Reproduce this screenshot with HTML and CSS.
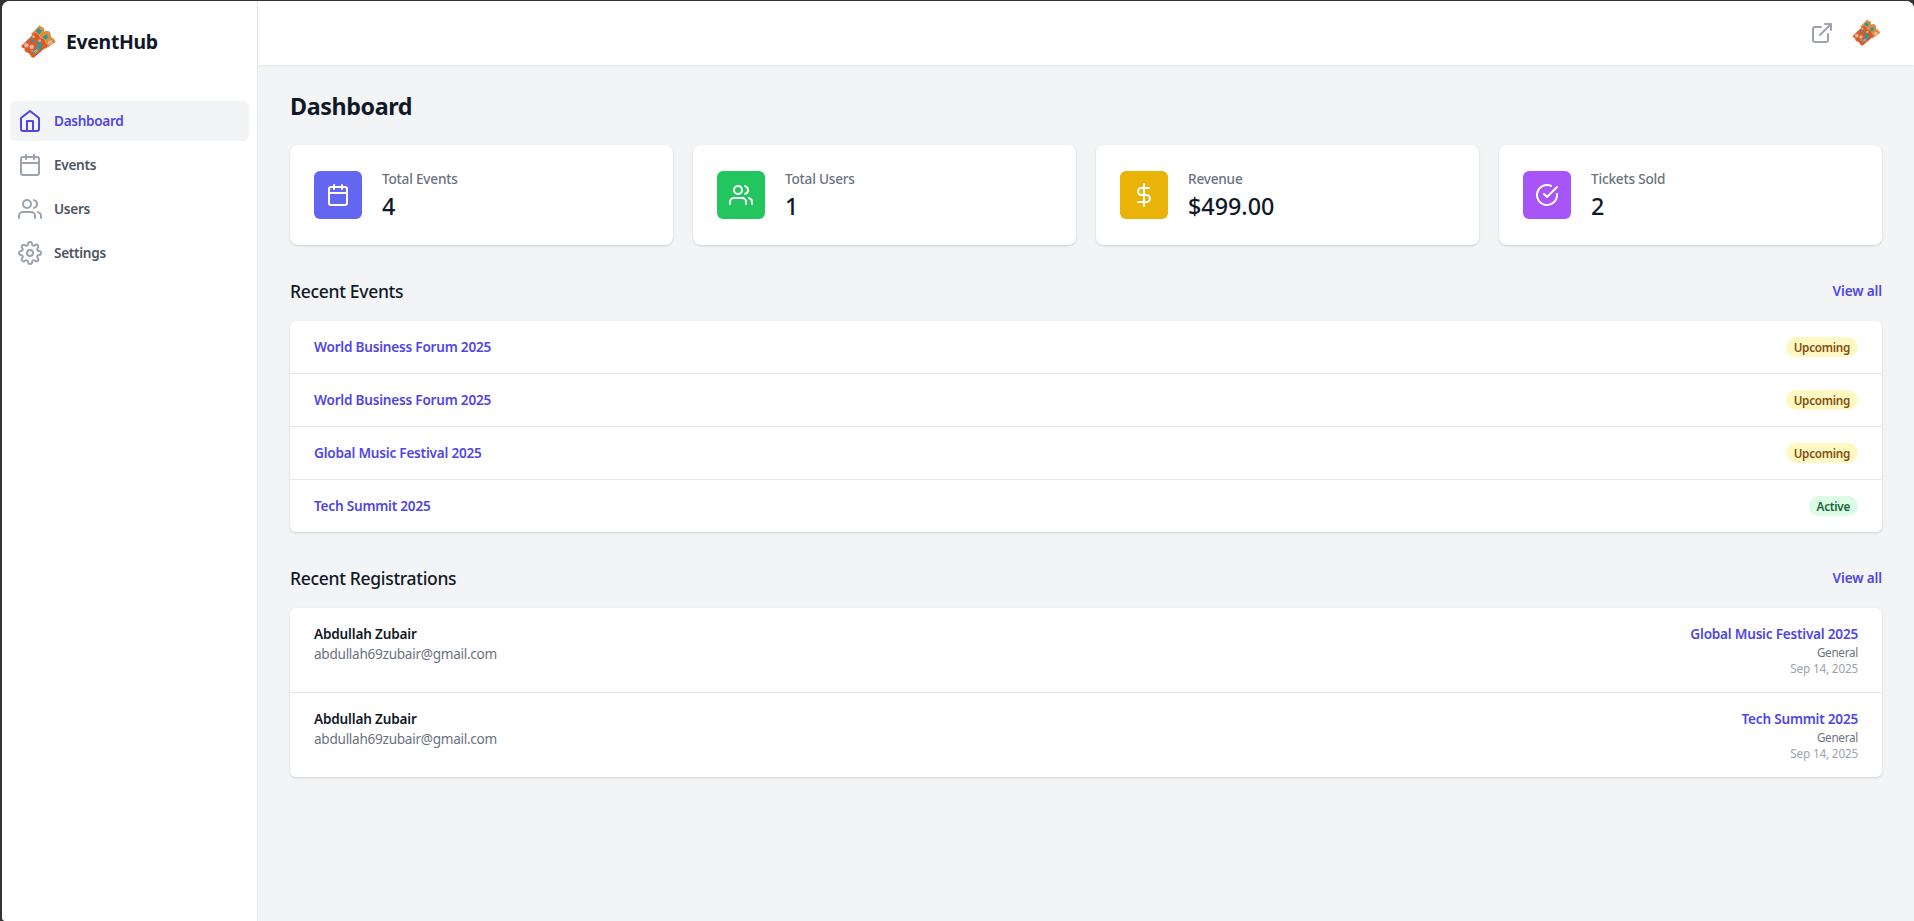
FILE: index.html
```html
<!DOCTYPE html>
<html lang="en">
<head>
<meta charset="utf-8">
<title>EventHub Dashboard</title>
<link rel="stylesheet" href="styles.css">
</head>
<body>
<svg class="defs" aria-hidden="true">
  <symbol id="i-home" viewBox="0 0 24 24"><path d="M3 9l9-7 9 7v11a2 2 0 0 1-2 2H5a2 2 0 0 1-2-2z"/><path d="M9 22V12h6v10"/></symbol>
  <symbol id="i-calendar" viewBox="0 0 24 24"><rect x="3" y="4" width="18" height="18" rx="2"/><path d="M16 2v4M8 2v4M3 10h18"/></symbol>
  <symbol id="i-users" viewBox="0 0 24 24"><path d="M17 21v-2a4 4 0 0 0-4-4H5a4 4 0 0 0-4 4v2"/><circle cx="9" cy="7" r="4"/><path d="M23 21v-2a4 4 0 0 0-3-3.87M16 3.13a4 4 0 0 1 0 7.75"/></symbol>
  <symbol id="i-settings" viewBox="0 0 24 24"><circle cx="12" cy="12" r="3"/><path d="M19.4 15a1.65 1.65 0 0 0 .33 1.82l.06.06a2 2 0 0 1 0 2.83 2 2 0 0 1-2.83 0l-.06-.06a1.65 1.65 0 0 0-1.82-.33 1.65 1.65 0 0 0-1 1.51V21a2 2 0 0 1-2 2 2 2 0 0 1-2-2v-.09A1.65 1.65 0 0 0 9 19.4a1.65 1.65 0 0 0-1.82.33l-.06.06a2 2 0 0 1-2.83 0 2 2 0 0 1 0-2.83l.06-.06a1.65 1.65 0 0 0 .33-1.82 1.65 1.65 0 0 0-1.51-1H3a2 2 0 0 1-2-2 2 2 0 0 1 2-2h.09A1.65 1.65 0 0 0 4.6 9a1.65 1.65 0 0 0-.33-1.82l-.06-.06a2 2 0 0 1 0-2.83 2 2 0 0 1 2.83 0l.06.06a1.65 1.65 0 0 0 1.82.33H9a1.65 1.65 0 0 0 1-1.51V3a2 2 0 0 1 2-2 2 2 0 0 1 2 2v.09a1.65 1.65 0 0 0 1 1.51 1.65 1.65 0 0 0 1.82-.33l.06-.06a2 2 0 0 1 2.83 0 2 2 0 0 1 0 2.83l-.06.06a1.65 1.65 0 0 0-.33 1.82V9a1.65 1.65 0 0 0 1.51 1H21a2 2 0 0 1 2 2 2 2 0 0 1-2 2h-.09a1.65 1.65 0 0 0-1.51 1z"/></symbol>
  <symbol id="i-external" viewBox="0 0 24 24"><path d="M18 13v6a2 2 0 0 1-2 2H5a2 2 0 0 1-2-2V8a2 2 0 0 1 2-2h6M15 3h6v6M10 14L21 3"/></symbol>
  <symbol id="i-dollar" viewBox="0 0 24 24"><path d="M12 1v22M17 5H9.5a3.5 3.5 0 0 0 0 7h5a3.5 3.5 0 0 1 0 7H6"/></symbol>
  <symbol id="i-check" viewBox="0 0 24 24"><path d="M22 11.08V12a10 10 0 1 1-5.93-9.14"/><path d="M22 4L12 14.01l-3-3"/></symbol>
  <symbol id="logo" viewBox="0 0 40 40">
    <path fill="#dd8d3f" d="M13 12L21.5 3.2q2 2.4 4.4 2.5.7 1.6.4 4 2.6-1.6 4.6-.4 1.8 1.2 1.9 4-.2 2 1.7 2.6 2.2 1 3.2 4L27.5 27z"/>
    <path fill="#dc5a29" d="M3 24.2L17 10.6q4.500 2.200 5 5.400 3.800-.5 5 3 .5 2.500 3 4.600L15.400 36q-2.400-.3-3.200-3.200-2-2.500-4.700-2.800-1.200-1.600-1-3.500-2.300-.5-3.500-2.300z"/>
    <path fill="none" stroke="#e9b37c" stroke-width=".9" stroke-dasharray="1.2 .9" d="M16.500 9.500q5 2 6 6.500 4 0 5 3.500.500 2.500 4 4"/>
    <path fill="#2d9a98" d="M20.300 6.200l3.700 2.600-2.600 3.500-3.700-2.700zM28.200 12.200l2.300 2.800-3.200 3.100-2.800-2.900zM13.500 15.500l1.500 2.500 2.800.2-.8 1.600-3.300-.4-2-1.600zM22 19.500l.6 3 3.100.6-2.700 1.700-.3 4-2.100-3.200-3.200-.1 1.800-2.100-.7-2.900z"/>
    <path fill="#329c99" d="M14 30l5.200-4.100 3 1.200-5.800 4.900z"/>
    <path stroke="#e8c4a7" stroke-width=".8" d="M15.500 30.200l3.900-2.800M17 31l3-2.500"/>
    <g fill="#e5b69b"><circle cx="8.400" cy="23.200" r="2.300"/><circle cx="13.700" cy="24.900" r="2.200"/><circle cx="15.500" cy="14.800" r="1.300"/><circle cx="21.700" cy="18.600" r="1.300"/><circle cx="32.300" cy="20.500" r="2.200"/><circle cx="14" cy="28.700" r=".8"/></g>
  </symbol>
</svg>
<div class="window">
  <aside class="sidebar">
    <div class="brand"><svg class="brand-logo"><use href="#logo"/></svg><span class="brand-name">EventHub</span></div>
    <nav class="nav">
      <a class="nav-item active"><svg class="icon"><use href="#i-home"/></svg><span>Dashboard</span></a>
      <a class="nav-item"><svg class="icon"><use href="#i-calendar"/></svg><span>Events</span></a>
      <a class="nav-item"><svg class="icon"><use href="#i-users"/></svg><span>Users</span></a>
      <a class="nav-item"><svg class="icon"><use href="#i-settings"/></svg><span>Settings</span></a>
    </nav>
  </aside>
  <div class="content">
    <header class="topbar"><svg class="icon"><use href="#i-external"/></svg><svg class="avatar"><use href="#logo"/></svg></header>
    <main class="main">
      <h1 class="title">Dashboard</h1>
      <div class="stats">
        <div class="card"><div class="tile indigo"><svg class="icon"><use href="#i-calendar"/></svg></div><div><div class="label">Total Events</div><div class="value">4</div></div></div>
        <div class="card"><div class="tile green"><svg class="icon"><use href="#i-users"/></svg></div><div><div class="label">Total Users</div><div class="value">1</div></div></div>
        <div class="card"><div class="tile yellow"><svg class="icon"><use href="#i-dollar"/></svg></div><div><div class="label">Revenue</div><div class="value">$499.00</div></div></div>
        <div class="card"><div class="tile purple"><svg class="icon"><use href="#i-check"/></svg></div><div><div class="label">Tickets Sold</div><div class="value">2</div></div></div>
      </div>
      <section class="section">
        <div class="section-head"><h2 class="heading">Recent Events</h2><a class="link view">View all</a></div>
        <div class="list">
          <div class="row"><a class="link">World Business Forum 2025</a><span class="badge upcoming">Upcoming</span></div>
          <div class="row"><a class="link">World Business Forum 2025</a><span class="badge upcoming">Upcoming</span></div>
          <div class="row"><a class="link">Global Music Festival 2025</a><span class="badge upcoming">Upcoming</span></div>
          <div class="row"><a class="link">Tech Summit 2025</a><span class="badge live">Active</span></div>
        </div>
      </section>
      <section class="section">
        <div class="section-head"><h2 class="heading">Recent Registrations</h2><a class="link view">View all</a></div>
        <div class="list">
          <div class="row"><div><div class="name">Abdullah Zubair</div><div class="email">abdullah69zubair@gmail.com</div></div><div class="right"><div class="link">Global Music Festival 2025</div><div class="kind">General</div><div class="date">Sep 14, 2025</div></div></div>
          <div class="row"><div><div class="name">Abdullah Zubair</div><div class="email">abdullah69zubair@gmail.com</div></div><div class="right"><div class="link">Tech Summit 2025</div><div class="kind">General</div><div class="date">Sep 14, 2025</div></div></div>
        </div>
      </section>
    </main>
  </div>
</div>
</body>
</html>
```

FILE: styles.css
```css
* { box-sizing: border-box; margin: 0; }
body {
  height: 921px;
  padding: 1px 0 0 2px;
  overflow: hidden;
  background: #333;
  font-family: "Noto Sans", "Open Sans", sans-serif;
  font-size: 13.6px;
  line-height: 20px;
  color: #111827;
}
.defs { position: absolute; width: 0; height: 0; }
.window {
  display: flex;
  height: 920px;
  background: #f3f4f6;
  border-radius: 8px 8px 0 4px;
  overflow: hidden;
}
.icon {
  display: block;
  flex: none;
  width: 24px;
  height: 24px;
  fill: none;
  stroke: currentColor;
  stroke-width: 2;
  stroke-linecap: round;
  stroke-linejoin: round;
}
.sidebar {
  flex: none;
  width: 256px;
  background: #fff;
  border-right: 1px solid #e5e7eb;
}
.brand { display: flex; align-items: center; gap: 8px; padding: 21px 16px; }
.brand-logo { width: 40px; height: 40px; }
.brand-name { font-size: 19.4px; font-weight: 700; line-height: 28px; letter-spacing: -.3px; }
.nav { display: flex; flex-direction: column; gap: 4px; padding: 18px 8px 0; }
.nav-item {
  display: flex;
  align-items: center;
  gap: 12px;
  height: 40px;
  padding: 0 8px;
  border-radius: 6px;
  font-weight: 600;
  letter-spacing: -.3px;
  color: #4b5563;
}
.nav-item .icon { color: #9ca3af; }
.active { background: #f3f4f6; color: #4f46e5; }
.nav-item.active .icon { color: #4f46e5; }
.content { flex: 1; min-width: 0; }
.topbar {
  display: flex;
  align-items: center;
  justify-content: flex-end;
  gap: 16px;
  height: 64px;
  padding: 0 32px;
  background: #fff;
  box-shadow: 0 1px 2px rgba(0, 0, 0, .06);
  color: #9ca3af;
}
.avatar { width: 32px; height: 32px; }
.main { padding: 24px 32px; }
.title { padding-top: 1px; font-size: 23.3px; font-weight: 700; line-height: 32px; letter-spacing: -.4px; }
.stats { display: grid; grid-template-columns: repeat(4, 1fr); gap: 20px; margin-top: 23px; }
.card {
  display: flex;
  align-items: center;
  gap: 20px;
  height: 100px;
  padding: 0 24px;
  background: #fff;
  border-radius: 8px;
  box-shadow: 0 1px 3px rgba(0, 0, 0, .1), 0 1px 2px rgba(0, 0, 0, .06);
}
.tile { padding: 12px; border-radius: 6px; color: #fff; }
.indigo { background: #6366f1; }
.green { background: #22c55e; }
.yellow { background: #eab308; }
.purple { background: #a855f7; }
.label { font-weight: 500; letter-spacing: -.2px; color: #6b7280; }
.value { padding-top: 2px; font-size: 23.3px; font-weight: 500; line-height: 30px; }
.section { margin-top: 32px; }
.section-head { display: flex; align-items: center; justify-content: space-between; }
.heading { font-size: 17.5px; font-weight: 500; line-height: 28px; letter-spacing: -.31px; }
.link { font-weight: 600; letter-spacing: -.22px; color: #4f46e5; }
.view { letter-spacing: -.13px; }
.list {
  margin-top: 16px;
  background: #fff;
  border-radius: 6px;
  box-shadow: 0 1px 3px rgba(0, 0, 0, .1), 0 1px 2px rgba(0, 0, 0, .06);
}
.row { display: flex; justify-content: space-between; padding: 16px 24px; }
.row + .row { border-top: 1px solid #e5e7eb; }
.badge {
  padding: 1px 8px 0;
  border-radius: 10px;
  font-size: 11.7px;
  font-weight: 600;
  line-height: 19px;
  letter-spacing: -.26px;
}
.upcoming { background: #fef9c3; color: #854d0e; }
.live { background: #dcfce7; color: #166534; }
.name { font-weight: 600; letter-spacing: -.18px; }
.email { letter-spacing: -.28px; color: #6b7280; }
.right { text-align: right; }
.kind, .date { font-size: 11.7px; line-height: 16px; letter-spacing: -.15px; }
.kind { letter-spacing: -.28px; color: #6b7280; }
.date { color: #9ca3af; }
```
